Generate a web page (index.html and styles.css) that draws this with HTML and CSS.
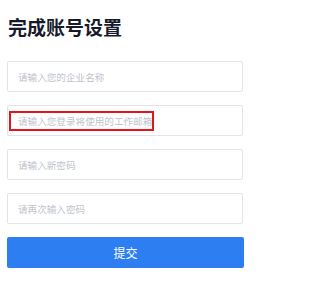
FILE: index.html
```html
<!DOCTYPE html>
<html lang="zh">
<head>
<meta charset="utf-8">
<link rel="stylesheet" href="styles.css">
</head>
<body>
<div class="page">
  <h1 class="title">完成账号设置</h1>
  <form class="form">
    <div class="field"><input class="input" type="text" placeholder="请输入您的企业名称"></div>
    <div class="field highlight-wrap">
      <input class="input" type="text" placeholder="请输入您登录将使用的工作邮箱">
      <span class="highlight"></span>
    </div>
    <div class="field"><input class="input" type="password" placeholder="请输入新密码"></div>
    <div class="field"><input class="input" type="password" placeholder="请再次输入密码"></div>
    <button class="submit" type="button">提交</button>
  </form>
</div>
</body>
</html>
```
FILE: styles.css
```css
* { box-sizing: border-box; }
html, body { margin: 0; padding: 0; background: #fff; }
body { font-family: "Noto Sans CJK SC", "Noto Sans", sans-serif; }
.page { padding: 15px 42px 0 7px; width: 285px; }
.title {
  margin: 0 0 0 1px;
  font-size: 19px;
  line-height: 24px;
  font-weight: 700;
  color: #161a2b;
  letter-spacing: 0;
}
.form { display: flex; flex-direction: column; gap: 13px; margin-top: 22px; }
.field { position: relative; }
.input {
  display: block;
  width: 236px;
  height: 31px;
  border: 1px solid #e2e4ea;
  border-radius: 2px;
  padding: 0 0 0 10px;
  font-family: inherit;
  font-size: 9.6px;
  color: #333;
  background: #fff;
  outline: none;
}
.input::placeholder { color: #c0c4cc; }
.highlight {
  position: absolute;
  left: 2px;
  top: 6px;
  width: 145px;
  height: 20px;
  border: 2px solid #e8141c;
  pointer-events: none;
}
.submit {
  display: block;
  width: 237px;
  height: 31px;
  border: none;
  border-radius: 2px;
  background: #2c7ef1;
  color: #fff;
  font-family: inherit;
  font-size: 12px;
}
```
